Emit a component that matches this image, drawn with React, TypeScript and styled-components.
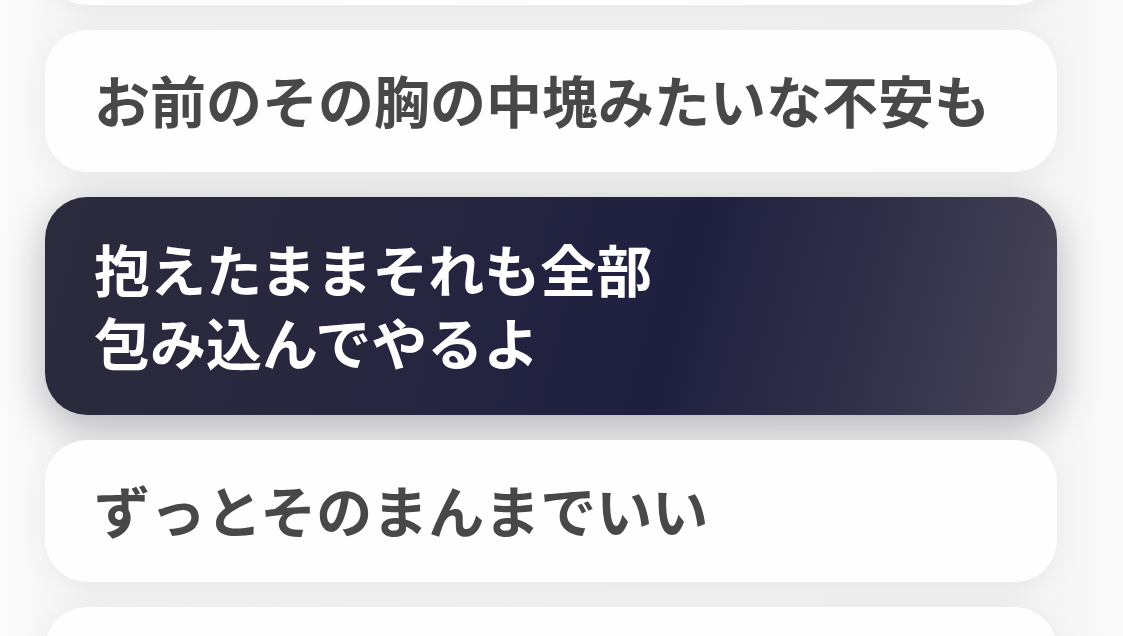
import React, { FC } from 'react';
import styled, { createGlobalStyle, css } from 'styled-components';

const GlobalStyle = createGlobalStyle`
  html, body {
    margin: 0;
    padding: 0;
    background: #f8f8f8;
  }
  body {
    font-family: "Noto Sans CJK JP", "Noto Sans", sans-serif;
    overflow: hidden;
  }
`;

const Screen = styled.div`
  width: 1123px;
  height: 636px;
  overflow: hidden;
  background: linear-gradient(90deg, #fbfbfb 0%, #f3f3f3 8%, #f2f2f2 90%, #fafafa 100%);
`;

const LyricList = styled.ul`
  list-style: none;
  margin: -137px 0 0 45px;
  padding: 0;
  width: 1012px;
  display: flex;
  flex-direction: column;
  gap: 25px;
`;

const Line = styled.li<{ $active?: boolean }>`
  box-sizing: border-box;
  min-height: 142px;
  padding: 30px 50px 36px 49px;
  border-radius: 42px;
  display: flex;
  align-items: center;
  background: #fefefe;
  box-shadow: 0 4px 30px rgba(0, 0, 0, 0.05);
  color: #484848;
  font-size: 56px;
  font-weight: 700;
  line-height: 73px;
  letter-spacing: 0;

  ${(p) =>
    p.$active &&
    css`
      padding: 34px 50px 38px 49px;
      color: #ffffff;
      background: linear-gradient(
        105deg,
        #2c2b3c 0%,
        #252540 40%,
        #1f2040 62%,
        #33324a 82%,
        #4a4659 100%
      );
      box-shadow: 0 12px 40px rgba(20, 20, 40, 0.28);
    `}
`;

const Text = styled.span`
  white-space: pre-line;
`;

interface ILyric {
  text: string;
  active?: boolean;
}

const lyrics: ILyric[] = [
  { text: '' },
  { text: 'お前のその胸の中塊みたいな不安も' },
  { text: '抱えたままそれも全部\n包み込んでやるよ', active: true },
  { text: 'ずっとそのまんまでいい' },
  { text: '' },
];

const App: FC = () => {
  return (
    <>
      <GlobalStyle />
      <Screen>
        <LyricList>
          {lyrics.map((l, i) => (
            <Line key={i} $active={l.active}>
              <Text>{l.text}</Text>
            </Line>
          ))}
        </LyricList>
      </Screen>
    </>
  );
};

export default App;
